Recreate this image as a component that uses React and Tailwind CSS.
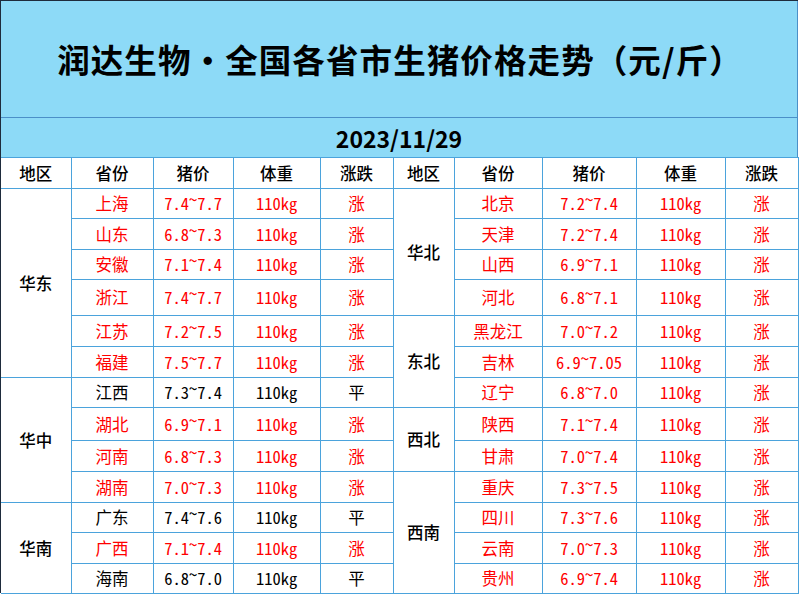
const cols = [70, 82, 80, 87, 73, 61, 88, 94, 89, 73];
const heights = [30, 31, 30, 36, 31, 31, 30, 33, 31, 31, 30, 31, 30];

const left = [
  ['上海', '7.4~7.7', '涨'],
  ['山东', '6.8~7.3', '涨'],
  ['安徽', '7.1~7.4', '涨'],
  ['浙江', '7.4~7.7', '涨'],
  ['江苏', '7.2~7.5', '涨'],
  ['福建', '7.5~7.7', '涨'],
  ['江西', '7.3~7.4', '平'],
  ['湖北', '6.9~7.1', '涨'],
  ['河南', '6.8~7.3', '涨'],
  ['湖南', '7.0~7.3', '涨'],
  ['广东', '7.4~7.6', '平'],
  ['广西', '7.1~7.4', '涨'],
  ['海南', '6.8~7.0', '平'],
];

const right = [
  ['北京', '7.2~7.4', '涨'],
  ['天津', '7.2~7.4', '涨'],
  ['山西', '6.9~7.1', '涨'],
  ['河北', '6.8~7.1', '涨'],
  ['黑龙江', '7.0~7.2', '涨'],
  ['吉林', '6.9~7.05', '涨'],
  ['辽宁', '6.8~7.0', '涨'],
  ['陕西', '7.1~7.4', '涨'],
  ['甘肃', '7.0~7.4', '涨'],
  ['重庆', '7.3~7.5', '涨'],
  ['四川', '7.3~7.6', '涨'],
  ['云南', '7.0~7.3', '涨'],
  ['贵州', '6.9~7.4', '涨'],
];

// row index -> [name, rowSpan]
const leftRegions = { 0: ['华东', 6], 6: ['华中', 4], 10: ['华南', 3] };
const rightRegions = { 0: ['华北', 4], 4: ['东北', 3], 7: ['西北', 2], 9: ['西南', 4] };

const cell = 'border border-[#4ba3dc] text-center align-middle p-0';

function Price({ value }) {
  const [a, b] = value.split('~');
  return (
    <span className="[font-feature-settings:'hwid']">
      {a}
      <span className="relative top-[-4px]">~</span>
      {b}
    </span>
  );
}

function Item({ row }) {
  const [name, price, trend] = row;
  const color = trend === '平' ? 'text-black' : 'text-[#ff0000]';
  return (
    <>
      <td className={`${cell} ${color}`}>{name}</td>
      <td className={`${cell} ${color}`}>
        <Price value={price} />
      </td>
      <td className={`${cell} ${color} [font-feature-settings:'hwid']`}>110kg</td>
      <td className={`${cell} ${color}`}>{trend}</td>
    </>
  );
}

export default function App() {
  return (
    <div className="h-[595px] w-[800px] overflow-hidden bg-white font-['Noto_Sans_CJK_SC',sans-serif]">
      <div className="h-[593px] w-[798px] border-l border-t border-[#1e2b3c]">
        <div className="flex h-[117px] items-center justify-center border-b border-r border-[#4b8fc8] bg-[#8ddaf7] pl-[2px]">
          <h1 className="text-[32.5px] font-bold tracking-[1.1px] text-black">润达生物·全国各省市生猪价格走势（元/斤）</h1>
        </div>
        <div className="flex h-[39px] items-center justify-center border-r border-[#4b8fc8] bg-[#8ddaf7] pt-[1px]">
          <span className="text-[23px] font-bold text-black">2023/11/29</span>
        </div>
        <table className="w-[797px] table-fixed border-collapse text-[16.5px] leading-none">
          <colgroup>
            {cols.map((w, i) => (
              <col key={i} style={{ width: w }} />
            ))}
          </colgroup>
          <tbody>
            <tr className="h-[31px] font-medium text-black">
              {['地区', '省份', '猪价', '体重', '涨跌', '地区', '省份', '猪价', '体重', '涨跌'].map((t, i) => (
                <td key={i} className={`${cell} ${i === 0 ? 'border-l-0' : ''}`}>{t}</td>
              ))}
            </tr>
            {heights.map((h, i) => (
              <tr key={i} style={{ height: h }}>
                {leftRegions[i] && (
                  <td rowSpan={leftRegions[i][1]} className={`${cell} border-l-0 font-medium text-black`}>
                    {leftRegions[i][0]}
                  </td>
                )}
                <Item row={left[i]} />
                {rightRegions[i] && (
                  <td rowSpan={rightRegions[i][1]} className={`${cell} font-medium text-black`}>
                    {rightRegions[i][0]}
                  </td>
                )}
                <Item row={right[i]} />
              </tr>
            ))}
          </tbody>
        </table>
      </div>
    </div>
  );
}
